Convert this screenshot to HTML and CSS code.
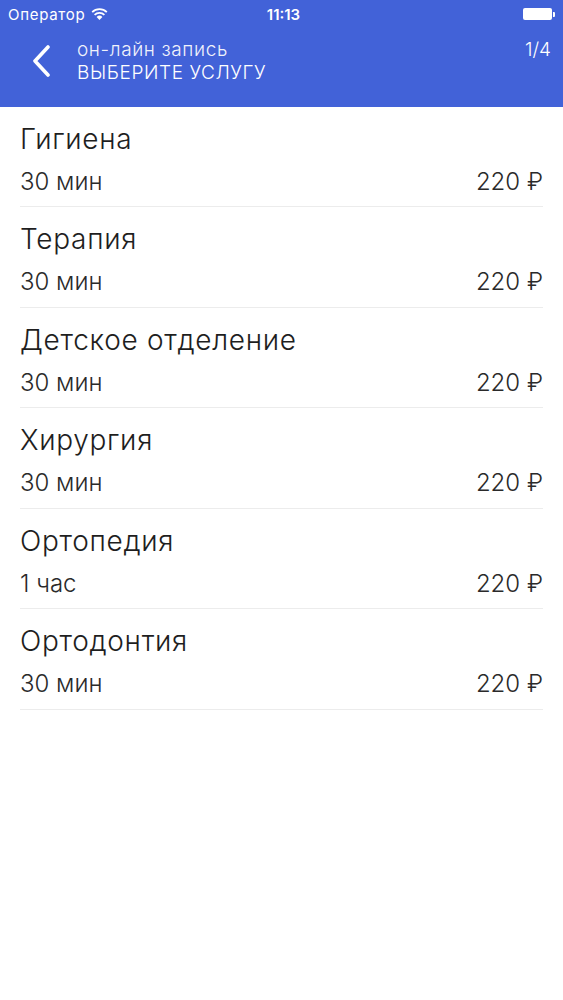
FILE: index.html
```html
<!DOCTYPE html>
<html>

<head>
  <meta charset="utf-8">
  <meta name="viewport" content="width=device-width">
  <title>Онлайн запись</title>
  <link rel="stylesheet" href="styles.css">
</head>

<body>
  <header class="top">
    <div class="status">
      <div class="status-left">
        <span>Оператор</span>
        <svg class="wifi" width="17" height="12" viewBox="0 0 17 12">
          <path d="M8.5 12 L5.6 8.9 A4.2 4.2 0 0 1 11.4 8.9 Z" fill="#fff"/>
          <path d="M3.6 6.8 A7 7 0 0 1 13.4 6.8" stroke="#fff" stroke-width="1.8" fill="none"/>
          <path d="M1.2 4.2 A10.4 10.4 0 0 1 15.8 4.2" stroke="#fff" stroke-width="1.8" fill="none"/>
        </svg>
      </div>
      <span class="clock">11:13</span>
      <div class="battery">
        <span class="battery-body"></span>
        <span class="battery-tip"></span>
      </div>
    </div>
    <div class="navbar">
      <svg class="back" width="20" height="32" viewBox="0 0 20 32">
        <path d="M17 2 L4 16 L17 30" stroke="#fff" stroke-width="3.6" fill="none" stroke-linecap="round" stroke-linejoin="round"/>
      </svg>
      <div class="nav-titles">
        <div class="nav-sub">он-лайн запись</div>
        <div class="nav-main">ВЫБЕРИТЕ УСЛУГУ</div>
      </div>
      <div class="step">1/4</div>
    </div>
  </header>

  <ul class="services">
    <li class="service">
      <div class="service-name">Гигиена</div>
      <div class="service-meta"><span>30 мин</span><span>220 ₽</span></div>
    </li>
    <li class="service">
      <div class="service-name">Терапия</div>
      <div class="service-meta"><span>30 мин</span><span>220 ₽</span></div>
    </li>
    <li class="service">
      <div class="service-name">Детское отделение</div>
      <div class="service-meta"><span>30 мин</span><span>220 ₽</span></div>
    </li>
    <li class="service">
      <div class="service-name">Хирургия</div>
      <div class="service-meta"><span>30 мин</span><span>220 ₽</span></div>
    </li>
    <li class="service">
      <div class="service-name">Ортопедия</div>
      <div class="service-meta"><span>1 час</span><span>220 ₽</span></div>
    </li>
    <li class="service">
      <div class="service-name">Ортодонтия</div>
      <div class="service-meta"><span>30 мин</span><span>220 ₽</span></div>
    </li>
  </ul>
</body>

</html>
```

FILE: styles.css
```css
html,
body {
  margin: 0;
  padding: 0;
  background: #fff;
  font-family: Inter, Roboto, "Liberation Sans", sans-serif;
}

.top {
  background: #4262d8;
  color: #fff;
  height: 107px;
}

.status {
  height: 28px;
  display: flex;
  align-items: center;
  justify-content: space-between;
  padding: 0 8px;
  font-size: 15px;
  position: relative;
}

.status-left {
  display: flex;
  align-items: center;
  gap: 6px;
  letter-spacing: 0.7px;
}

.clock {
  position: absolute;
  left: 0;
  right: 0;
  text-align: center;
  font-weight: 600;
  padding-left: 4px;
}

.battery {
  display: flex;
  align-items: center;
}

.battery-body {
  width: 29px;
  height: 12px;
  background: #fff;
  border-radius: 2px;
}

.battery-tip {
  width: 2px;
  height: 5px;
  background: #fff;
  margin-left: 1px;
  border-radius: 0 1px 1px 0;
}

.navbar {
  display: flex;
  align-items: flex-start;
  padding: 10px 12px 0 31px;
}

.back {
  margin-top: 7px;
}

.nav-titles {
  flex: 1;
  margin-left: 26px;
  font-size: 19px;
  line-height: 23px;
  font-weight: 300;
  letter-spacing: 0.6px;
}

.nav-sub {
  opacity: 0.92;
}

.step {
  font-size: 19px;
  font-weight: 300;
  line-height: 23px;
}

.services {
  list-style: none;
  margin: 0;
  padding: 0 20px;
}

.service {
  border-bottom: 1px solid #ececec;
  height: 100px;
  padding-top: 15px;
  box-sizing: border-box;
  color: #1e1e1e;
}

.service:nth-child(2n) {
  height: 101px;
}

.service-name {
  font-size: 28px;
  font-weight: 300;
  line-height: 34px;
  letter-spacing: 0.7px;
}

.service-meta {
  display: flex;
  justify-content: space-between;
  font-size: 24px;
  font-weight: 300;
  line-height: 30px;
  margin-top: 11px;
  color: #2a2a2a;
}
```
